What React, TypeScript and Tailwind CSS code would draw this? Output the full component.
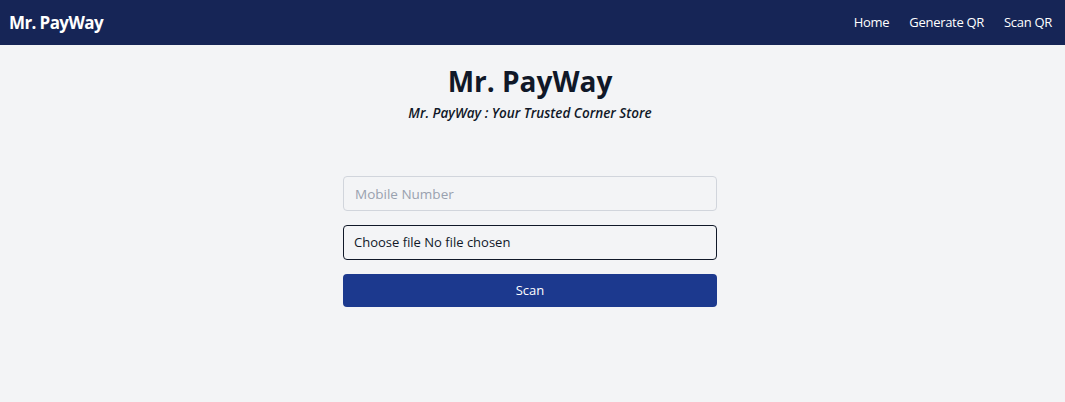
export default function App() {
  return (
    <div className="min-h-screen bg-gray-100 text-gray-900" style={{ fontFamily: "'Open Sans', 'Noto Sans', sans-serif" }}>
      <nav className="flex h-[45px] items-center justify-between bg-blue-950 pl-[9px] pr-[13px] text-white">
        <span className="text-[17px] font-bold tracking-[-0.6px]">Mr. PayWay</span>
        <div className="flex gap-5 text-[13px] tracking-[-0.3px]">
          <a href="#">Home</a>
          <a href="#">Generate QR</a>
          <a href="#">Scan QR</a>
        </div>
      </nav>

      <div className="flex flex-col items-center pr-[5px]">
        <h1 className="mt-[16px] text-[28px] font-bold leading-[40px]">Mr. PayWay</h1>
        <p className="mt-[2px] text-[13.5px] font-semibold italic">Mr. PayWay : Your Trusted Corner Store</p>

        <form className="mt-[53px] flex w-[374px] flex-col gap-[14px]">
          <input
            type="text"
            placeholder="Mobile Number"
            className="h-[35px] rounded border border-gray-300 px-[11px] text-[13.5px] placeholder-gray-400 outline-none"
          />
          <div className="flex h-[35px] items-center rounded border border-gray-900 px-[10px] text-[13px]">
            Choose file No file chosen
          </div>
          <button type="button" className="h-[33px] rounded bg-blue-900 text-[13px] text-white">
            Scan
          </button>
        </form>
      </div>
    </div>
  );
}
